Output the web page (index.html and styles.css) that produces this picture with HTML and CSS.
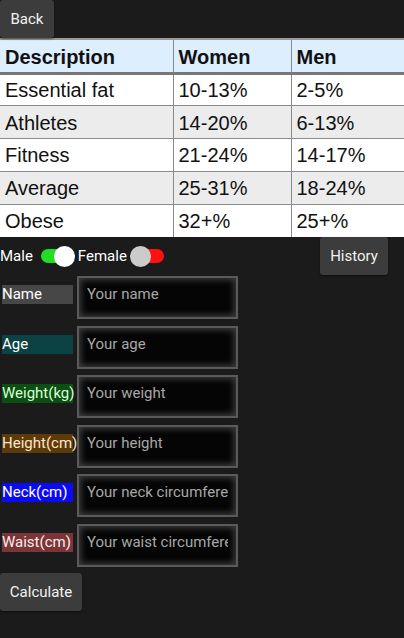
FILE: index.html
```html
<!DOCTYPE html>
<html>
<head>
<meta charset="utf-8">
<link rel="stylesheet" href="styles.css">
</head>
<body>
<div class="topbar"><button class="btn back">Back</button></div>
<table class="fat">
  <thead>
    <tr><th class="c1">Description</th><th class="c2">Women</th><th class="c3">Men</th></tr>
  </thead>
  <tbody>
    <tr><td>Essential fat</td><td>10-13%</td><td>2-5%</td></tr>
    <tr class="alt"><td>Athletes</td><td>14-20%</td><td>6-13%</td></tr>
    <tr><td>Fitness</td><td>21-24%</td><td>14-17%</td></tr>
    <tr class="alt"><td>Average</td><td>25-31%</td><td>18-24%</td></tr>
    <tr><td>Obese</td><td>32+%</td><td>25+%</td></tr>
  </tbody>
</table>
<div class="genderbar">
  <span class="glabel male">Male</span>
  <span class="toggle on"><span class="track"></span><span class="thumb"></span></span>
  <span class="glabel">Female</span>
  <span class="toggle off"><span class="track"></span><span class="thumb"></span></span>
  <button class="btn history">History</button>
</div>
<div class="form">
  <div class="row"><span class="lbl name">Name</span><input class="field" placeholder="Your name"></div>
  <div class="row"><span class="lbl age">Age</span><input class="field" placeholder="Your age"></div>
  <div class="row"><span class="lbl weight">Weight(kg)</span><input class="field" placeholder="Your weight"></div>
  <div class="row"><span class="lbl height">Height(cm)</span><input class="field" placeholder="Your height"></div>
  <div class="row"><span class="lbl neck">Neck(cm)</span><input class="field" placeholder="Your neck circumference"></div>
  <div class="row"><span class="lbl waist">Waist(cm)</span><input class="field" placeholder="Your waist circumference"></div>
</div>
<button class="btn calc">Calculate</button>
</body>
</html>
```

FILE: styles.css
```css
html, body {
  margin: 0;
  padding: 0;
  background: #1b1b1b;
  width: 404px;
  height: 638px;
  overflow: hidden;
  font-family: Roboto, "Noto Sans", sans-serif;
  color: #fff;
}
.btn {
  background: #3c3c3c;
  color: #f2f2f2;
  border: none;
  border-radius: 3px;
  font-family: Roboto, sans-serif;
  font-size: 15px;
  padding: 0;
  box-shadow: 0 1px 2px rgba(0,0,0,0.5);
}
.topbar {
  height: 38px;
}
.back {
  width: 54px;
  height: 38px;
}
.fat {
  width: 404px;
  border-collapse: collapse;
  table-layout: fixed;
  font-family: "Liberation Sans", Arial, sans-serif;
  font-size: 20px;
  color: #111;
  border-top: 2px solid #9a9a9a;
}
.fat th, .fat td {
  text-align: left;
  padding: 0 5px;
  border-left: 1px solid #8a8a8a;
  border-right: 1px solid #8a8a8a;
}
.fat th:first-child, .fat td:first-child { border-left: none; }
.fat th:last-child, .fat td:last-child { border-right: none; }
.c1 { width: 173px; }
.c2 { width: 118px; }
.fat thead tr {
  background: #ddeeff;
  border-bottom: 3px solid #777;
}
.fat th {
  font-weight: bold;
  height: 34px;
  box-sizing: border-box;
  padding-top: 4px;
}
.fat tbody tr {
  background: #fff;
  border-bottom: 1px solid #8a8a8a;
}
.fat td {
  height: 32.8px;
  box-sizing: border-box;
  padding-top: 2px;
}
.fat tbody tr:last-child { border-bottom: none; }
.fat tbody tr.alt { background: #ececec; }
.genderbar {
  display: flex;
  align-items: center;
  height: 39px;
  font-size: 15px;
}
.glabel { color: #fff; }
.toggle {
  position: relative;
  width: 34px;
  height: 20px;
  margin: 0 3px;
}
.glabel.male { margin-right: 8px; }
.toggle .track {
  position: absolute;
  top: 3px;
  height: 14px;
  border-radius: 7px;
}
.toggle .thumb {
  position: absolute;
  top: 0;
  width: 21px;
  height: 21px;
  border-radius: 50%;
}
.toggle.on { margin-left: 0; }
.toggle.on .track { left: 0; width: 32px; background: #22dd22; }
.toggle.on .thumb { left: 13px; background: #fff; }
.toggle.off .track { left: 8px; width: 26px; background: #f11; }
.toggle.off .thumb { left: 0; background: #cbcbcb; }
.history {
  margin-left: auto;
  margin-right: 16px;
  width: 68px;
  height: 38px;
  align-self: flex-start;
}
.form {
  display: flex;
  flex-direction: column;
  gap: 6.6px;
}
.row {
  display: flex;
  align-items: baseline;
}
.lbl {
  width: 71px;
  margin-left: 2px;
  margin-right: 4px;
  font-size: 15px;
  line-height: 19px;
  white-space: nowrap;
}
.name { background: #474747; }
.age { background: #0b4345; }
.weight { background: #0b5010; color: #d8ffd8; }
.height { background: #5c3a0a; color: #ffe6c8; }
.neck { background: #0a0af8; }
.waist { background: #7a3538; color: #ffecec; }
.field {
  box-sizing: border-box;
  width: 161px;
  height: 43px;
  background: #050505;
  border: 2px solid #5a5a5a;
  box-shadow: inset 0 0 6px 2px rgba(110,110,110,0.55);
  padding: 8px 8px 15px 8px;
  font-family: Roboto, sans-serif;
  font-size: 15px;
  line-height: 18px;
  color: #eee;
  outline: none;
}
.field::placeholder { color: #a8a8a8; }
.calc {
  margin-top: 6px;
  width: 82px;
  height: 38px;
}
```
